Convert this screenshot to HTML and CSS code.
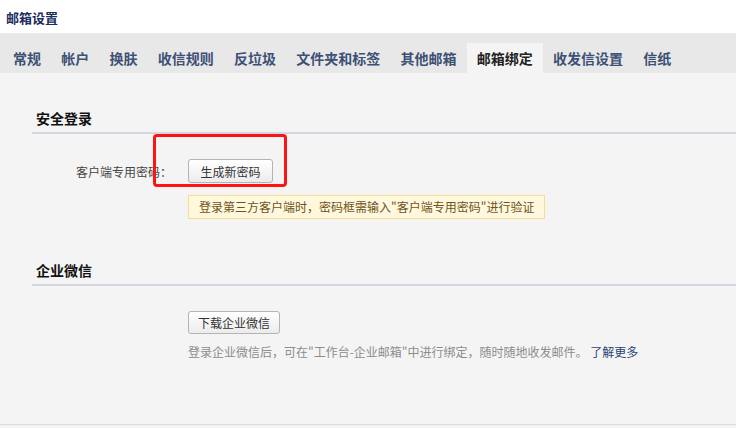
FILE: index.html
```html
<!DOCTYPE html>
<html lang="zh-CN">
<head>
  <meta charset="UTF-8">
  <meta name="viewport" content="width=device-width, initial-scale=1.0">
  <title>邮箱设置</title>
  <link rel="stylesheet" href="styles.css">
</head>

<body>
  <!-- Header -->
  <div class="page-header">
    <h1 class="page-title">邮箱设置</h1>
  </div>

  <!-- Tabs -->
  <div class="tab-bar">
    <a class="tab">常规</a>
    <a class="tab">帐户</a>
    <a class="tab">换肤</a>
    <a class="tab">收信规则</a>
    <a class="tab">反垃圾</a>
    <a class="tab">文件夹和标签</a>
    <a class="tab">其他邮箱</a>
    <a class="tab active">邮箱绑定</a>
    <a class="tab">收发信设置</a>
    <a class="tab">信纸</a>
  </div>

  <div class="settings-body">
    <!-- 安全登录 -->
    <div class="section">
      <h2 class="section-title">安全登录</h2>
      <div class="form-row">
        <label class="form-label">客户端专用密码：</label>
        <div class="form-field">
          <span class="highlight-wrap">
            <button class="btn">生成新密码</button>
            <span class="highlight-box"></span>
          </span>
        </div>
      </div>
      <div class="form-row">
        <div class="form-label"></div>
        <div class="form-field">
          <div class="tip-box">登录第三方客户端时，密码框需输入"客户端专用密码"进行验证</div>
        </div>
      </div>
    </div>

    <!-- 企业微信 -->
    <div class="section section-wework">
      <h2 class="section-title">企业微信</h2>
      <div class="form-row">
        <div class="form-label"></div>
        <div class="form-field">
          <button class="btn">下载企业微信</button>
          <p class="hint-text">登录企业微信后，可在"工作台-企业邮箱"中进行绑定，随时随地收发邮件。 <a class="link">了解更多</a></p>
        </div>
      </div>
    </div>
  </div>
</body>
</html>
```

FILE: styles.css
```css
* {
  margin: 0;
  padding: 0;
  box-sizing: border-box;
}

body {
  background: #f4f4f4;
  font-family: "Noto Sans CJK SC", "Liberation Sans", sans-serif;
  font-size: 12px;
  color: #333;
  height: 428px;
  overflow: hidden;
}

.page-header {
  background: white;
  height: 33px;
  padding-left: 6px;
}

.page-title {
  font-size: 13px;
  font-weight: 700;
  color: #1c2d5c;
  line-height: 36px;
}

.tab-bar {
  display: flex;
  align-items: flex-end;
  height: 40px;
  padding-left: 3px;
  background: #e8e8e8;
}

.tab {
  height: 30px;
  padding: 0 10px;
  margin-right: 0.25px;
  font-size: 14px;
  font-weight: 700;
  line-height: 30px;
  color: #3d5075;
  cursor: pointer;
}

.tab.active {
  background: #f4f4f4;
  color: #222;
}

.settings-body {
  height: 352px;
  padding-top: 31px;
  border-bottom: 1px solid #dcdcdc;
}

.section {
  padding-left: 32px;
}

.section-wework {
  margin-top: 37px;
}

.section-title {
  font-size: 14px;
  font-weight: 700;
  color: #111;
  line-height: 28px;
  padding-left: 4px;
  border-bottom: 2px solid #d3d7e0;
}

.form-row {
  display: flex;
  align-items: center;
}

.section .form-row:nth-of-type(1) {
  margin-top: 25px;
}

.form-row + .form-row {
  margin-top: 12px;
}

.form-label {
  width: 140px;
  text-align: right;
  color: #444;
}

.form-field {
  margin-left: 16px;
}

.btn {
  height: 24px;
  min-width: 85px;
  padding: 0 9px;
  font-family: inherit;
  font-size: 12px;
  color: #333;
  background: linear-gradient(#ffffff, #ececec);
  border: 1px solid #b4b4b4;
  border-radius: 3px;
  cursor: pointer;
}

.section-wework .btn {
  height: 23px;
}

.highlight-wrap {
  position: relative;
  display: inline-block;
}

.highlight-box {
  position: absolute;
  top: -25px;
  left: -35px;
  right: -14px;
  bottom: -4px;
  border: 3px solid #ff1414;
  border-radius: 4px;
  pointer-events: none;
}

.tip-box {
  height: 24px;
  line-height: 22px;
  padding: 0 10px;
  background: #fff8dd;
  border: 1px solid #f5dd95;
  color: #6e5422;
}

.hint-text {
  margin-top: 8px;
  line-height: 20px;
  color: #8c8c8c;
}

.link {
  color: #2a4576;
  cursor: pointer;
}
```
